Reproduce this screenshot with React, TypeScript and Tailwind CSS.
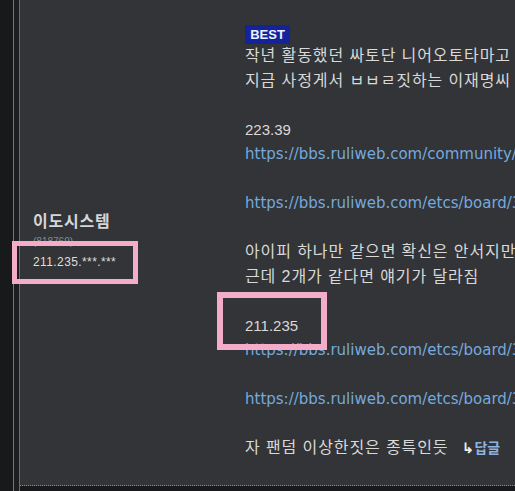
const ko = { fontFamily: '"Liberation Sans", "Noto Sans CJK KR", sans-serif' };
const url = { fontFamily: '"DejaVu Sans", "Noto Sans CJK KR", sans-serif' };

type Kind = "ko" | "num" | "link";

function Line({ children, kind = "ko" }: { children?: React.ReactNode; kind?: Kind }) {
  const cls =
    kind === "link"
      ? "text-[15px] text-[#76a9dc]"
      : kind === "num"
        ? "text-[15px] text-[#d9d9d9]"
        : "text-[16px] tracking-[0.9px] text-[#d9d9d9]";
  return (
    <div className={`h-[24.5px] leading-[24.5px] whitespace-nowrap ${cls}`} style={kind === "link" ? url : ko}>
      {children ?? "\u00a0"}
    </div>
  );
}

export default function App() {
  return (
    <div className="flex w-[515px] h-[491px] overflow-hidden bg-[#17191a]">
      {/* left rail */}
      <div className="w-[13px] shrink-0 bg-[#17191a]" />
      <div className="w-px shrink-0 bg-[#77777a]" />
      <div className="w-[5px] shrink-0 bg-[#1c1e1f]" />
      <div className="w-px shrink-0 bg-[#6c6c6f]" />

      <div className="flex flex-col flex-1 min-w-0">
        <div className="relative flex h-[486px] bg-[#323437] border-b border-dotted border-[#8a8a8a]">
          {/* user info */}
          <div className="w-[225px] shrink-0 pl-[13px] pt-[211px]" style={ko}>
            <div className="text-[16px] leading-[22px] tracking-[0.8px] font-bold text-[#d6d6d8]">이도시스템</div>
            <div className="text-[10px] leading-[18px] text-[#8a8a8d]">(818769)</div>
            <div className="mt-[1px] text-[12px] leading-[20px] text-[#dedede] tracking-[0.4px]">211.235.***.***</div>
          </div>

          {/* comment body */}
          <div className="flex-1 min-w-0 overflow-hidden pt-[25px]">
            <div className="w-[45px] h-[19px] bg-[#14239a] flex items-center justify-center text-[13px] font-bold text-[#eef0ff]" style={ko}>
              BEST
            </div>
            <Line>작년 활동했던 싸토단 니어오토타마고</Line>
            <Line>지금 사정게서 ㅂㅂㄹ짓하는 이재명씨</Line>
            <Line />
            <Line kind="num">223.39</Line>
            <Line kind="link">https://bbs.ruliweb.com/community/board/</Line>
            <Line />
            <Line kind="link">https://bbs.ruliweb.com/etcs/board/3002</Line>
            <Line />
            <Line>아이피 하나만 같으면 확신은 안서지만</Line>
            <Line>근데 2개가 같다면 얘기가 달라짐</Line>
            <Line />
            <Line kind="num">211.235</Line>
            <Line kind="link">https://bbs.ruliweb.com/etcs/board/3002</Line>
            <Line />
            <Line kind="link">https://bbs.ruliweb.com/etcs/board/3002</Line>
            <Line />
            <div className="flex items-center h-[24.5px] whitespace-nowrap" style={ko}>
              <span className="text-[16px] tracking-[0.9px] text-[#d9d9d9]">자 팬덤 이상한짓은 종특인듯</span>
              <span className="ml-[14px] text-[14px] font-bold text-[#ececec]">↳</span>
              <span className="text-[14px] font-bold text-[#8cb3e3]">답글</span>
            </div>
          </div>

          {/* pink annotation boxes */}
          <div className="absolute left-[-8px] top-[241px] w-[126px] h-[43px] border-[5px] border-[#f4adc9]" />
          <div className="absolute left-[197px] top-[292px] w-[110px] h-[58px] border-[6px] border-[#f4adc9]" />
        </div>
      </div>
    </div>
  );
}
